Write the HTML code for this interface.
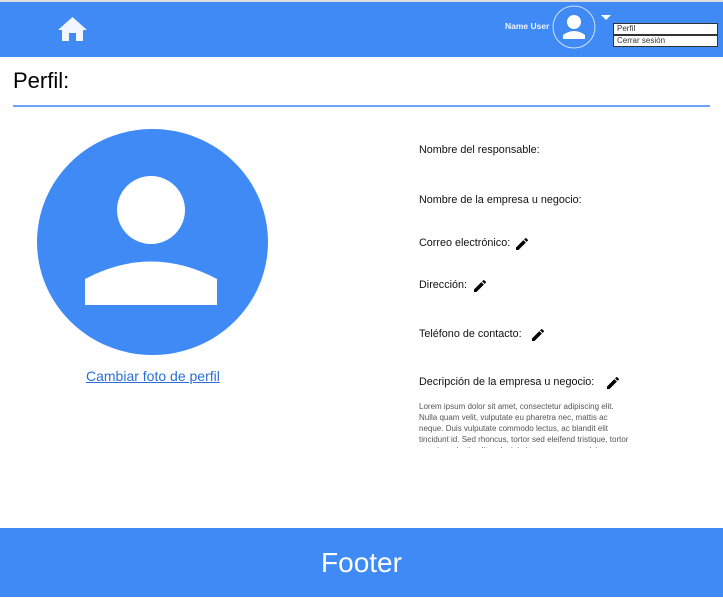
<!DOCTYPE html>
<html><head><style>
body{margin:0;width:723px;height:597px;position:relative;background:#fff;font-family:"Liberation Sans",sans-serif;overflow:hidden}
.a{position:absolute}
.hdr{left:0;top:2px;width:723px;height:55px;background:#3f8af5}
.lbl{font-size:10.8px;color:#111;left:419px}
.pen{width:16px;height:16px}
</style></head><body>
<div class="a" style="left:0;top:0;width:723px;height:2px;background:#ddd"></div>
<div class="a hdr"></div>
<svg class="a" style="left:58px;top:17px" width="29" height="24" viewBox="0 0 29 24"><path d="M14.5 0 L29 13 H25 V24 H18 V16 H11 V24 H4 V13 H0 Z" fill="#f2f7ff"/></svg>
<div class="a" style="left:505px;top:21px;font-size:8.5px;font-weight:bold;color:#f0f4ff">Name User</div>
<svg class="a" style="left:552px;top:5px" width="44" height="44" viewBox="0 0 44 44"><circle cx="22" cy="22" r="21" fill="none" stroke="#cfe0ff" stroke-width="1"/><circle cx="22" cy="17" r="7" fill="#fff"/><path d="M11 34 V30 Q22 22 33 30 V34 Z" fill="#fff"/></svg>
<svg class="a" style="left:601px;top:15px" width="10" height="6"><path d="M0 0 H10 L5 5Z" fill="#fff"/></svg>
<div class="a" style="left:613px;top:23px;width:100px;height:10px;background:#fff;border:1px solid #333;font-size:8px;line-height:10px;padding-left:3px;color:#333">Perfil</div>
<div class="a" style="left:613px;top:35px;width:100px;height:10px;background:#fff;border:1px solid #333;font-size:8px;line-height:10px;padding-left:3px;color:#333">Cerrar sesión</div>
<div class="a" style="left:13px;top:68px;font-size:22px;color:#000">Perfil:</div>
<div class="a" style="left:13px;top:105px;width:697px;height:2px;background:#6aa4f7"></div>
<svg class="a" style="left:37px;top:129px" width="231" height="226" viewBox="0 0 231 226"><ellipse cx="115.5" cy="113" rx="115.5" ry="113" fill="#3f8af5"/><circle cx="114" cy="81" r="34" fill="#fff"/><path d="M48 176 V150 Q114 115 180 150 V176 Z" fill="#fff"/></svg>
<div class="a" style="left:86px;top:368px;font-size:14px;color:#2a6fd6;text-decoration:underline">Cambiar foto de perfil</div>
<div class="a lbl" style="top:144px">Nombre del responsable:</div>
<div class="a lbl" style="top:194px">Nombre de la empresa u negocio:</div>
<div class="a lbl" style="top:237px">Correo electrónico:</div>
<svg class="a pen" style="left:514px;top:236px" viewBox="0 0 24 24"><path d="M3 17.25V21h3.75L17.81 9.94l-3.75-3.75L3 17.25zM20.71 7.04a1 1 0 0 0 0-1.41l-2.34-2.34a1 1 0 0 0-1.41 0l-1.83 1.83 3.75 3.75 1.83-1.83z"/></svg>
<div class="a lbl" style="top:279px">Dirección:</div>
<svg class="a pen" style="left:472px;top:278px" viewBox="0 0 24 24"><path d="M3 17.25V21h3.75L17.81 9.94l-3.75-3.75L3 17.25zM20.71 7.04a1 1 0 0 0 0-1.41l-2.34-2.34a1 1 0 0 0-1.41 0l-1.83 1.83 3.75 3.75 1.83-1.83z"/></svg>
<div class="a lbl" style="top:328px">Teléfono de contacto:</div>
<svg class="a pen" style="left:530px;top:327px" viewBox="0 0 24 24"><path d="M3 17.25V21h3.75L17.81 9.94l-3.75-3.75L3 17.25zM20.71 7.04a1 1 0 0 0 0-1.41l-2.34-2.34a1 1 0 0 0-1.41 0l-1.83 1.83 3.75 3.75 1.83-1.83z"/></svg>
<div class="a lbl" style="top:376px">Decripción de la empresa u negocio:</div>
<svg class="a pen" style="left:605px;top:375px" viewBox="0 0 24 24"><path d="M3 17.25V21h3.75L17.81 9.94l-3.75-3.75L3 17.25zM20.71 7.04a1 1 0 0 0 0-1.41l-2.34-2.34a1 1 0 0 0-1.41 0l-1.83 1.83 3.75 3.75 1.83-1.83z"/></svg>
<div class="a" style="left:419px;top:401px;width:212px;height:47px;overflow:hidden;font-size:8px;line-height:11px;color:#555">Lorem ipsum dolor sit amet, consectetur adipiscing elit. Nulla quam velit, vulputate eu pharetra nec, mattis ac neque. Duis vulputate commodo lectus, ac blandit elit tincidunt id. Sed rhoncus, tortor sed eleifend tristique, tortor mauris molestie elit, et lacinia ipsum quam nec dui.</div>
<div class="a" style="left:0;top:528px;width:723px;height:69px;background:#3f8af5;color:#fff;font-size:28px;text-align:center;line-height:70px">Footer</div>
</body></html>
